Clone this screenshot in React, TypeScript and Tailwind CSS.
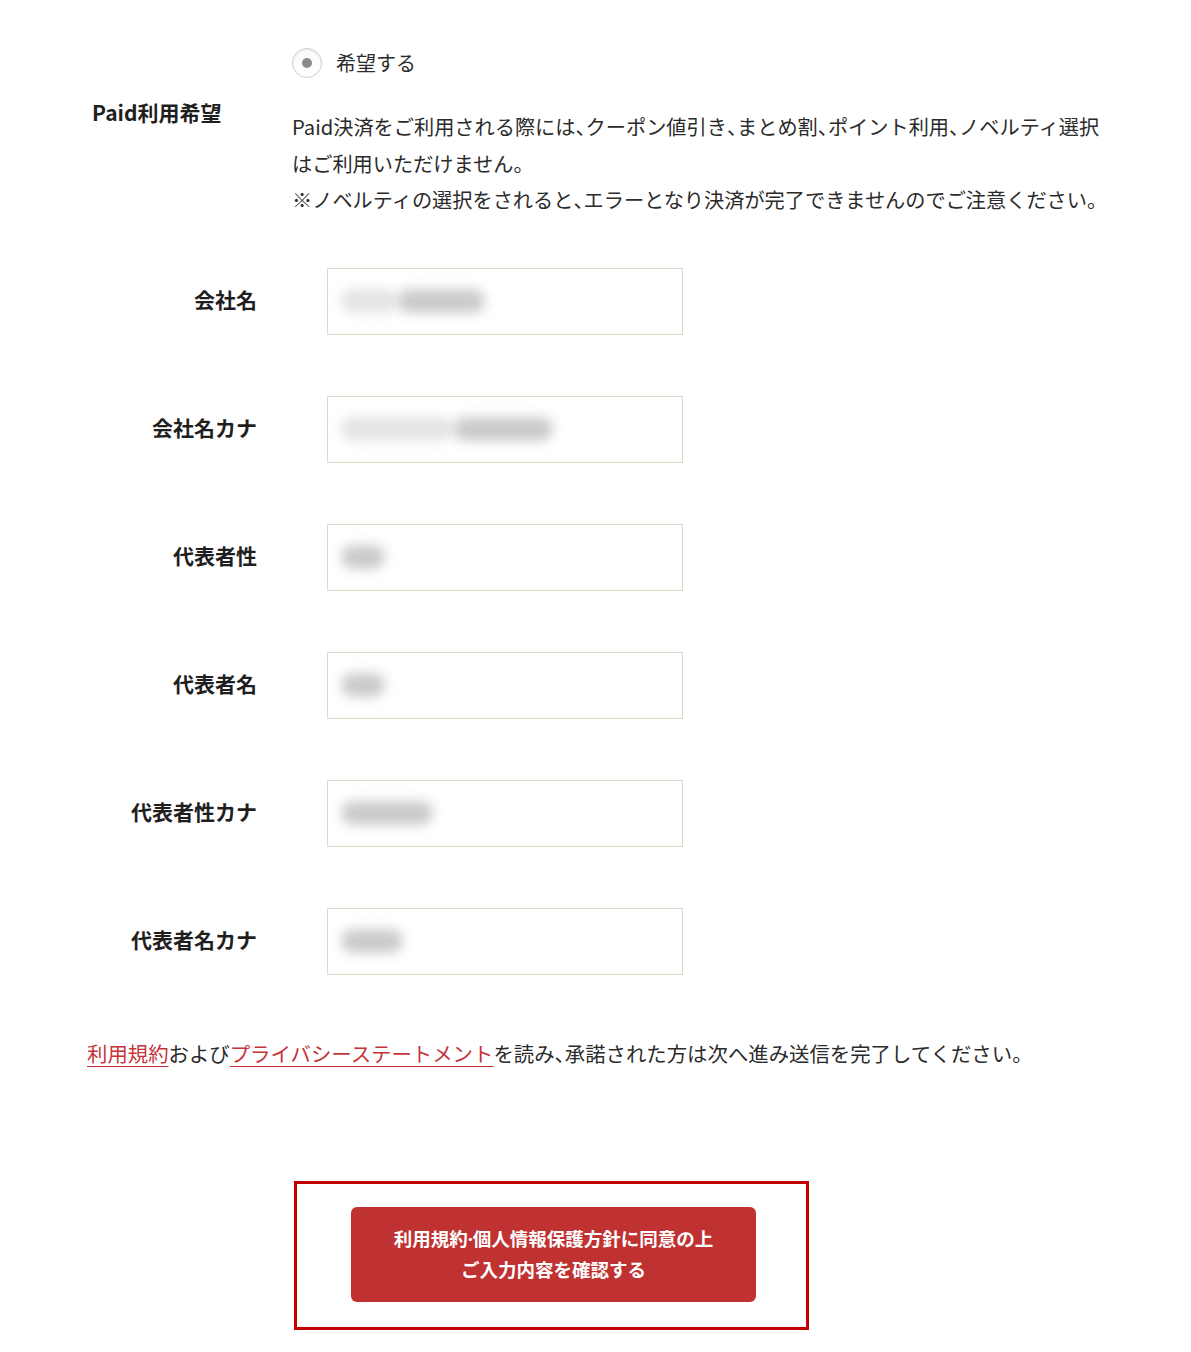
import React from 'react';

type Field = {
  label: string;
  blobs: { w: number; tone: 'light' | 'dark' }[];
};

const fields: Field[] = [
  { label: '会社名', blobs: [{ w: 56, tone: 'light' }, { w: 88, tone: 'dark' }] },
  { label: '会社名カナ', blobs: [{ w: 112, tone: 'light' }, { w: 100, tone: 'dark' }] },
  { label: '代表者性', blobs: [{ w: 44, tone: 'dark' }] },
  { label: '代表者名', blobs: [{ w: 44, tone: 'dark' }] },
  { label: '代表者性カナ', blobs: [{ w: 92, tone: 'dark' }] },
  { label: '代表者名カナ', blobs: [{ w: 62, tone: 'dark' }] },
];

const FONT = "font-['Noto_Sans_CJK_JP','Noto_Sans',sans-serif]";

// 句読点を半角幅に詰める
const Comma = () => <span className="tracking-[-0.5em]">、</span>;

const App = () => {
  return (
    <div className={`min-h-[1352px] bg-white text-[#2b2b2b] ${FONT}`}>
      {/* Paid */}
      <section className="flex pt-[48px]">
        <div className="w-[292px] pl-[92px] pt-[50px]">
          <p className="text-[21px] font-bold leading-[28px] text-[#1f1f1f]">Paid利用希望</p>
        </div>
        <div>
          <label className="flex h-[30px] items-center gap-[14px]">
            <span className="flex h-[30px] w-[30px] items-center justify-center rounded-full border border-[#cfcfcf] bg-gradient-to-b from-[#fafafa] to-white shadow-[inset_0_1px_2px_rgba(0,0,0,0.08)]">
              <span className="h-[10px] w-[10px] rounded-full bg-[#8a8a8a]" />
            </span>
            <span className="text-[20px] leading-[30px]">希望する</span>
          </label>
          <p className="mt-[31px] whitespace-nowrap text-[20.2px] leading-[36.5px] text-[#2b2b2b]">
            Paid決済をご利用される際には<Comma />クーポン値引き<Comma />まとめ割<Comma />ポイント利用<Comma />ノベルティ選択
            <br />
            はご利用いただけません。
            <br />
            ※ノベルティの選択をされると<Comma />エラーとなり決済が完了できませんのでご注意ください。
          </p>
        </div>
      </section>

      {/* Fields */}
      <section className="mt-[49px] flex flex-col gap-[61px]">
        {fields.map((f) => (
          <div key={f.label} className="flex items-center">
            <div className="w-[257px] pb-[4px] text-right text-[21px] font-bold leading-[28px] text-[#1f1f1f]">
              {f.label}
            </div>
            <div className="ml-[70px] flex h-[67px] w-[356px] items-center border border-[#ddd9c9] bg-white pl-[13px]">
              {f.blobs.map((b, i) => (
                <span
                  key={i}
                  className={`h-[24px] rounded-full blur-[6px] ${b.tone === 'dark' ? 'bg-[#cbcbcb]' : 'bg-[#e4e4e4]'}`}
                  style={{ width: b.w }}
                />
              ))}
            </div>
          </div>
        ))}
      </section>

      {/* Terms */}
      <p className="mt-[63px] whitespace-nowrap pl-[87px] text-[20.4px] leading-[30px] text-[#2b2b2b]">
        <a href="#" className="text-[#c5343a] underline decoration-1 underline-offset-[4px]">利用規約</a>
        および
        <a href="#" className="text-[#c5343a] underline decoration-1 underline-offset-[4px]">プライバシーステートメント</a>
        を読み<Comma />承諾された方は次へ進み送信を完了してください。
      </p>

      {/* Submit */}
      <div className="ml-[294px] mt-[113px] h-[149px] w-[515px] border-[3px] border-[#c40000] pl-[54px] pt-[23px]">
        <button className="flex h-[95px] w-[405px] flex-col items-center justify-center rounded-[6px] bg-[#c03232] text-[18.5px] font-bold leading-[31px] text-white">
          <span>
            利用規約<span className="font-['Noto_Sans',sans-serif] font-bold">·</span>個人情報保護方針に同意の上
          </span>
          <span>ご入力内容を確認する</span>
        </button>
      </div>
    </div>
  );
};

export default App;
